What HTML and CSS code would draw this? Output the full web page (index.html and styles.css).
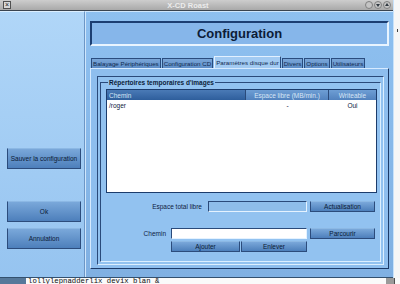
FILE: index.html
```html
<!DOCTYPE html>
<html>
<head>
    <meta charset="utf-8">
    <title>X-CD Roast - Configuration</title>
    <link rel="stylesheet" href="styles.css">
</head>
<body>
<div class="screen">
    <div class="top">
        <div class="win">
            <div class="titlebar">
                <span class="tb-close">&#215;</span>
                <span class="tb-title">X-CD Roast</span>
                <span class="tb-btns">
                    <i class="tb-b"></i>
                    <i class="tb-b"><svg width="6" height="6" viewBox="0 0 6 6"><path d="M1 2h4L3 5z" fill="#303840"/></svg></i>
                    <i class="tb-b"><svg width="6" height="6" viewBox="0 0 6 6"><path d="M1 4h4L3 1z" fill="#303840"/></svg></i>
                </span>
            </div>
            <div class="client">
                <div class="side">
                    <span class="btn btn-save">Sauver la configuration</span>
                    <span class="btn btn-ok">Ok</span>
                    <span class="btn">Annulation</span>
                </div>
                <div class="main">
                    <div class="heading">Configuration</div>
                    <div class="tabs">
                        <span class="tab">Balayage Périphériques</span>
                        <span class="tab">Configuration CD</span>
                        <span class="tab on">Paramètres disque dur</span>
                        <span class="tab">Divers</span>
                        <span class="tab">Options</span>
                        <span class="tab">Utilisateurs</span>
                    </div>
                    <div class="pane">
                        <div class="box">
                            <fieldset class="frame">
                                <legend>Répertoires temporaires d'images</legend>
                                <div class="list">
                                    <div class="lh">
                                        <span class="c1 sorted">Chemin</span>
                                        <span class="c2">Espace libre (MB/min.)</span>
                                        <span class="c3">Writeable</span>
                                    </div>
                                    <div class="lr">
                                        <span class="c1">/roger</span>
                                        <span class="c2">-</span>
                                        <span class="c3">Oui</span>
                                    </div>
                                </div>
                                <div class="row row-free">
                                    <label>Espace total libre</label>
                                    <span class="entry off ent-free"></span>
                                    <span class="btn sbtn">Actualisation</span>
                                </div>
                                <div class="row row-path">
                                    <label>Chemin</label>
                                    <span class="entry ent-path"></span>
                                    <span class="btn sbtn">Parcourir</span>
                                </div>
                                <div class="row row-acts">
                                    <span class="btn b-add">Ajouter</span>
                                    <span class="btn b-del">Enlever</span>
                                </div>
                            </fieldset>
                        </div>
                    </div>
                </div>
            </div>
        </div>
        <div class="desk-r"><i class="tick"></i></div>
    </div>
    <div class="term">
        <span class="term-l"></span>
        <span class="term-t">lollylepnadderlix devix blan &amp;</span>
        <span class="grip"></span>
    </div>
</div>
</body>
</html>
```

FILE: styles.css
```css
body { margin: 0; width: 400px; height: 284px; overflow: hidden; background: #f2f2f2; font-family: "Liberation Sans", Arial, sans-serif; font-size: 6.5px; color: #0c1c38; }
.screen { display: flex; flex-direction: column; height: 284px; }
.top { display: flex; height: 278px; }
.win { width: 394px; display: flex; flex-direction: column; background: #8cbaea; border-right: 1px solid #c8e2fa; box-sizing: border-box; }
.desk-r { flex: 1; background: #f6f6f6; padding-top: 29px; padding-left: 3px; }
.tick { display: block; width: 1px; height: 3px; background: #404040; }

/* title bar */
.titlebar { height: 10px; display: flex; align-items: center; background: linear-gradient(#cdcdcd, #a9a9a9); border-bottom: 1px solid #3a4450; }
.tb-close { width: 6px; height: 6px; margin-left: 3px; border: 1px solid #505050; background: #d8d8d8; font-size: 7px; line-height: 6px; text-align: center; color: #202020; }
.tb-title { flex: 1; text-align: center; font-weight: bold; font-size: 7.5px; color: #ececec; }
.tb-btns { display: flex; gap: 1px; margin-right: 2px; }
.tb-b { width: 6px; height: 6px; border-radius: 50%; border: 1px solid #808080; background: #c4c4c4; display: flex; }

/* window body */
.client { flex: 1; display: flex; border-bottom: 1px solid #33506e; }
.side { width: 85px; display: flex; flex-direction: column; padding: 136px 3px 0 7px; box-sizing: border-box; background: linear-gradient(#b0d6f8, #96c4f0); border-right: 1px solid #6c96c6; border-top: 1px solid #dcefff; }
.main { flex: 1; padding: 9px 4px 0 4px; border-left: 1px solid #cfe6fc; border-top: 1px solid #cfe6fc; background: linear-gradient(#8ec0f0, #80b0e2); }

.btn { display: flex; align-items: center; justify-content: center; box-sizing: border-box; background: linear-gradient(#7aa8da, #4d7fbb); border: 1px solid #2c4c7c; border-top-color: #8cb8e4; color: #0a1a36; white-space: nowrap; }
.side .btn { height: 21px; }
.btn-save { margin-bottom: 32px; }
.btn-ok { margin-bottom: 6px; }

.heading { height: 25px; box-sizing: border-box; border: 2px solid; border-color: #1c3e72 #e8f4ff #e8f4ff #1c3e72; background: #86b6ea; display: flex; align-items: center; justify-content: center; font-weight: bold; font-size: 13px; color: #0c1c38; }

.tabs { display: flex; align-items: flex-end; height: 12px; margin-top: 10px; padding-left: 1px; }
.tab { height: 10px; box-sizing: border-box; padding: 0 1px; display: flex; align-items: center; background: linear-gradient(#7aa6d8, #5e8ec8); border: 1px solid #2a4c7e; border-bottom: none; margin-right: 1px; font-size: 6.2px; color: #102a50; }
.tab.on { height: 12px; background: #a2caf2; border-color: #e2f0ff #2a4c7e #2a4c7e #e2f0ff; }

.pane { height: 201px; box-sizing: border-box; border: 1px solid; border-color: #d6eaff #1c3a68 #1c3a68 #d6eaff; padding: 7px 4px 3px 6px; background: #8ebeee; }
.box { height: 100%; box-sizing: border-box; border: 1px solid; border-color: #2a4a7a #dcefff #dcefff #2a4a7a; padding: 1px 2px 2px 2px; background: #92c2f0; }
.frame { margin: 0; height: 100%; box-sizing: border-box; border: 1px solid; border-color: #2a4a7a #dcefff #dcefff #2a4a7a; padding: 2px 3px 0 5px; }
.frame legend { padding: 0 1px; margin-left: 2px; font-weight: bold; font-size: 6.5px; line-height: 9px; }

.list { height: 102px; background: #fff; border: 1px solid #1c3c6c; }
.lh { display: flex; height: 10px; }
.lh span { display: flex; align-items: center; box-sizing: border-box; border-right: 1px solid #2a4a7a; color: #d8e6f6; }
.lh .c1 { background: linear-gradient(#4a7ab6, #2e5e9c); padding-left: 2px; }
.lh .c2, .lh .c3 { justify-content: center; background: linear-gradient(#6e9ed4, #5282be); }
.lh .c3 { border-right: none; }
.c1 { width: 139px; }
.c2 { width: 83px; text-align: center; }
.c3 { flex: 1; text-align: center; }
.lr { display: flex; height: 10px; align-items: center; color: #102040; }
.lr .c1 { padding-left: 2px; box-sizing: border-box; }

.row { display: flex; align-items: center; justify-content: flex-end; padding-right: 2px; }
.row label { color: #102040; }
.entry { height: 11px; box-sizing: border-box; background: #fff; border: 1px solid; border-color: #2a4a7a #e4f2ff #e4f2ff #2a4a7a; }
.entry.off { background: #8ebdea; }
.row-free { margin-top: 8px; }
.row-free label { margin-right: 6px; }
.ent-free { width: 99px; margin-right: 3px; }
.row-path { margin-top: 16px; }
.row-path label { margin-right: 5px; }
.ent-path { width: 136px; margin-right: 3px; }
.sbtn { width: 65px; height: 11px; }
.row-acts { margin-top: 2px; padding-right: 70px; gap: 1px; }
.row-acts .btn { height: 11px; }
.b-add { width: 69px; }
.b-del { width: 66px; }

/* desktop strip below */
.term { flex: 1; display: flex; overflow: hidden; background: #fafafa; }
.term-l { width: 26px; background: #56789a; }
.term-t { font-family: "Liberation Mono", monospace; font-size: 7.3px; line-height: 7px; padding-left: 2px; color: #101010; }
.grip { margin-left: auto; width: 8px; margin-right: 5px; background: #9a9a9a; border-right: 1px solid #505050; }
```
